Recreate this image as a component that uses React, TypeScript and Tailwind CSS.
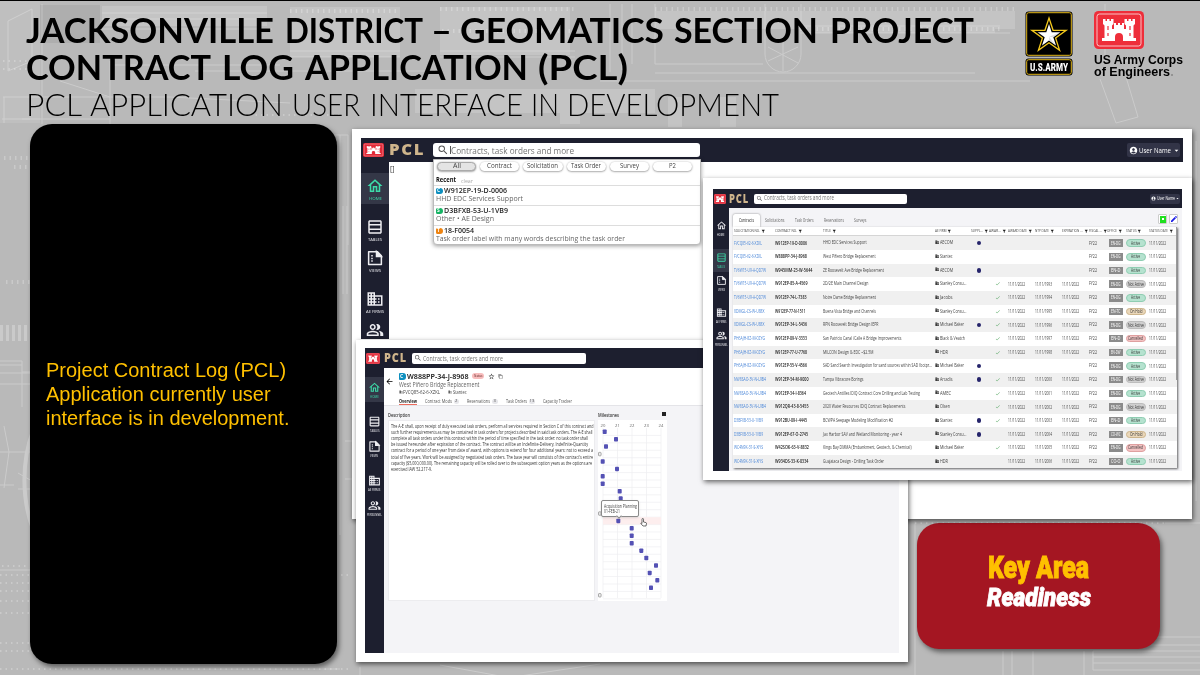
import { useLayoutEffect, useRef, useState, type ReactNode } from "react";
import {
  MdAccountCircle,
  MdArrowBack,
  MdArrowDropDown,
  MdCheck,
  MdContentCopy,
  MdDomain,
  MdEdit,
  MdFilterAlt,
  MdOutlineHome,
  MdOutlinePeopleAlt,
  MdOutlineTableRows,
  MdSearch,
  MdStarOutline,
} from "react-icons/md";

/** A single line of text condensed or widened to an exact width. */
function Fit({ w, className = "", children }: { w: number; className?: string; children: ReactNode }) {
  const ref = useRef<HTMLSpanElement>(null);
  const [scale, setScale] = useState(1);
  useLayoutEffect(() => {
    const el = ref.current;
    if (!el) return;
    el.style.transform = "none";
    const natural = el.getBoundingClientRect().width;
    const next = natural > 0 ? w / natural : 1;
    el.style.transform = `scaleX(${next})`;
    setScale(next);
  }, [w, children]);
  return (
    <span className="flex shrink-0" style={{ width: w }}>
      <span
        ref={ref}
        className={`block shrink-0 origin-left whitespace-nowrap ${className}`}
        style={{ transform: `scaleX(${scale})` }}
      >
        {children}
      </span>
    </span>
  );
}

function Backdrop() {
  return (
    <svg className="absolute inset-0 h-[675px] w-[1200px]" viewBox="0 0 1200 675" fill="none" stroke="#fff">
      <g opacity=".17" fill="#fff" stroke="none">
        <rect x="102" y="5" width="165" height="20" />
        <rect x="0" y="0" width="40" height="122" opacity=".5" />
        <rect x="290" y="6" width="110" height="50" />
        <rect x="440" y="6" width="130" height="48" />
        <rect x="655" y="10" width="360" height="18" />
        <rect x="805" y="20" width="190" height="12" />
        <rect x="415" y="88" width="240" height="24" />
        <rect x="560" y="93" width="20" height="30" />
        <rect x="668" y="96" width="14" height="30" />
        <rect x="720" y="96" width="16" height="30" />
      </g>
      <path d="M40 4h60v38H40z" fill="#000" opacity=".06" stroke="none" />
      <g opacity=".26">
        <path d="M8 20l24-12v52l-24 10zM42 3v120M3 96h107M110 60v63M2 118h108M4 96v26M60 80l50 16h60l120 6" />
        <path d="M102 12h165M102 18h165M102 28h170M110 64h170M195 70h240M290 50h110M290 56h110M440 50h135M440 56h135" />
        <path d="M610 3v68M622 3v66M632 3v60M655 3v60h108M655 72h320M600 80h430M800 25h200M800 32h210" />
        <path d="M765 3v50a18 18 0 0 0 36 0V3M783 36v34M768 60l30-14M768 46l30 16M1100 78l16 44 22-6-12-40M1105 3v60M1122 60h20" />
        <path d="M0 360h22v46M0 364h22M0 372h30M0 383h30M22 371h8M0 451h30M4 425l5 26-5 36M0 484h14M0 569h30" />
        <path d="M22 118h8M34 134h306v400M340 134h8v110M343 205v88M347 205v88M345 440h7M345 478h10" />
        <path d="M33 430a60 95 0 0 0 0 98" strokeWidth="4" />
        <path d="M18 472l14 8M18 488h12M180 668h160" />
        <path d="M360 666v9M440 664l60 11M600 663l-80 12M915 520v155M1003 650v25M1012 650v25M1033 650v25M1084 650v25M1093 650v19h107" />
        <path d="M1093 636h107M1165 522h35M1093 644h107M1093 650h107M1093 656h107M1093 662h107M1196 140v360" />
      </g>
      <g opacity=".25" strokeDasharray="1.5 4">
        <path d="M290 10h110M440 8h135M442 30h130M655 8h360M800 28h200M4 157h24M14 166h14M6 281h24" strokeWidth="4" />
        <path d="M0 332h30" strokeWidth="16" strokeDasharray="3 3" />
        <path d="M2 565h27M0 574h350M0 582h30M0 590h30M0 600h30M0 612h30M0 642h30M0 650h30M0 668h350M3 60h30M3 68h30M915 522h250M250 114h90" strokeWidth="2" />
      </g>
    </svg>
  );
}

function ArmyLogo() {
  return (
    <svg className="h-[65px] w-12 shrink-0 overflow-visible" viewBox="0 0 48 65">
      <rect x=".5" y=".5" width="47" height="45" rx="3" fill="#000" />
      <rect x="1.7" y="1.7" width="44.6" height="42.6" rx="2" fill="none" stroke="#e3b71b" strokeWidth="1" />
      <path
        d="M24 7l4.1 12.3h13L30.6 27l4 12.4L24 31.8l-10.600 7.600 4-12.400L6.900 19.300h13z"
        fill="#000"
        stroke="#f3c81c"
        strokeWidth="1.300"
      />
      <path d="M24 13l2.700 8.200h8.600l-7 5.100 2.700 8.200L24 29.400l-7 5.100 2.700-8.200-7-5.100h8.600z" fill="#fff" />
      <path d="M24 13v12.700l7 8.800L24 29.400zM24 25.700l11.300-4.500-7 5.100z" fill="#ccc" opacity=".6" />
      <rect x=".5" y="47.500" width="47" height="17" rx="3" fill="#000" />
      <rect x="1.700" y="48.700" width="44.600" height="14.600" rx="2" fill="none" stroke="#e3b71b" strokeWidth="1" />
      <text
        x="24"
        y="60"
        fill="#fff"
        textAnchor="middle"
        fontFamily="Roboto, sans-serif"
        fontWeight="900"
        fontSize="11"
        textLength="38"
        lengthAdjust="spacingAndGlyphs"
      >
        U.S.ARMY
      </text>
    </svg>
  );
}

function Castle({ className, color = "#e22a38" }: { className: string; color?: string }) {
  return (
    <svg className={className} viewBox="0 0 50 38" preserveAspectRatio="none">
      <rect width="50" height="38" rx="4.500" fill={color} />
      <rect x="3" y="3" width="44" height="32" rx="2.500" fill="none" stroke="#fff" strokeOpacity=".7" strokeWidth="1" />
      <path
        d="M9 8h2.500v2H13V8h2.500v2H17V8h2.500v5l-1.500 1.500V18h2v-6h2v2h2v-2h2v2h2v-2h2v6h2v-3.500L30.500 13V8H33v2h1.500V8H37v2h1.500V8H41v5l-1.500 1.500V27H42v3H29v-4a4 4 0 0 0-8 0v4H8v-3h2.500V14.500L9 13z"
        fill="#fff"
      />
      <path d="M14 15v4M36 15v4M14 22v3M36 22v3" stroke={color} strokeWidth="1.200" />
    </svg>
  );
}

function ViewsIcon({ className }: { className: string }) {
  return (
    <svg className={className} viewBox="0 0 24 24" fill="none" stroke="currentColor" strokeWidth="2">
      <path d="M3.500 3.500H15l5.500 5.500v11.500h-17z" strokeLinejoin="round" />
      <path d="M14 3.500V10h6.500z" fill="currentColor" />
      <path d="M8 8v2M8 11.500v2M8 15v2" />
    </svg>
  );
}

type Size = "lg" | "md" | "sm";

const railStyles = {
  lg: { rail: "w-7 pt-[11px] gap-[10px]", item: "h-[31px] pt-[4px]", icon: "size-[18px]", label: "text-[4px] mt-[2px]", ratio: 1 },
  md: { rail: "w-[19px] pt-[9px] gap-[9px]", item: "h-[25px] pt-[4px]", icon: "size-[13px]", label: "text-[3px] mt-[2px]", ratio: 0.68 },
  sm: { rail: "w-4 pt-[9px] gap-[9px]", item: "h-[23px] pt-[3px]", icon: "size-[11px]", label: "text-[2.600px] mt-[3px]", ratio: 0.58 },
};

function Rail({ size, active }: { size: Size; active: string }) {
  const s = railStyles[size];
  const groups = [
    [{ name: "HOME", w: 13, Icon: MdOutlineHome }],
    [
      { name: "TABLES", w: 14, Icon: MdOutlineTableRows },
      { name: "VIEWS", w: 12, Icon: ViewsIcon },
    ],
    [
      { name: "AE FIRMS", w: 18, Icon: MdDomain },
      { name: "PERSONNEL", w: 22, Icon: MdOutlinePeopleAlt },
    ],
  ];
  return (
    <div className={`flex shrink-0 flex-col bg-[#1d1f2f] ${s.rail}`}>
      {groups.map((group) => (
        <div key={group[0].name} className="flex flex-col">
          {group.map(({ name, w, Icon }) => (
            <div
              key={name}
              className={`flex shrink-0 flex-col items-center leading-none ${s.item} ${
                active === name ? "bg-[#343747] text-[#3ddcaa]" : "text-[#eeeef2]"
              }`}
            >
              <Icon className={`shrink-0 ${s.icon}`} />
              {!(size === "lg" && name === "PERSONNEL") && (
                <Fit w={w * s.ratio} className={s.label}>
                  {name}
                </Fit>
              )}
            </div>
          ))}
        </div>
      ))}
    </div>
  );
}

function UserButton({ small = false }: { small?: boolean }) {
  return (
    <div
      className={`ml-auto flex items-center rounded-[2px] bg-[#323447] leading-none text-white ${
        small ? "mr-[2px] h-[10px] w-[30px] gap-[.5px] px-px" : "mr-[3px] h-[14px] w-[53px] gap-px pl-[2px]"
      }`}
    >
      <MdAccountCircle className={small ? "size-[5px] shrink-0" : "size-[9px] shrink-0"} />
      <Fit w={small ? 18 : 32} className={small ? "text-[4.500px]" : "text-[7px]"}>
        User Name
      </Fit>
      <MdArrowDropDown className={small ? "size-[5px] shrink-0" : "size-[9px] shrink-0"} />
    </div>
  );
}

const recents = [
  { tag: "C", color: "bg-[#0d8fbf]", id: "W912EP-19-D-0006", idW: 63, label: "HHD EDC Services Support", w: 87 },
  { tag: "S", color: "bg-[#16b364]", id: "D3BFXB-53-U-1VB9", idW: 64, label: "Other • AE Design", w: 58 },
  { tag: "T", color: "bg-[#ee8411]", id: "18-F0054", idW: 30, label: "Task order label with many words describing the task order", w: 189 },
];

const pills = [
  { name: "All", w: 8 },
  { name: "Contract", w: 25 },
  { name: "Solicitation", w: 31 },
  { name: "Task Order", w: 30 },
  { name: "Survey", w: 19 },
  { name: "P2", w: 7 },
];

function HomeWindow() {
  return (
    <section className="absolute left-[352px] top-[129px] h-[390px] w-[840px] bg-white p-[9px] shadow-[1px_2px_5px_rgba(0,0,0,.6)]">
      <div className="flex h-[201px] flex-col overflow-hidden">
        <header className="flex h-6 shrink-0 items-center bg-[#1d1f2f]">
          <Castle className="ml-[2px] h-[14px] w-[21px]" />
          <div className="ml-[5px] w-[44px]">
            <Fit w={36} className="text-[15.500px] font-extrabold leading-none tracking-[1.500px] text-[#cfb58c]">
              PCL
            </Fit>
          </div>
          <div className="flex h-[14px] w-[267px] items-center rounded-[3px] bg-white pl-1 leading-none text-[#747474]">
            <MdSearch className="size-3 text-[#555]" />
            <span className="ml-px h-2 w-px bg-[#555]" />
            <Fit w={123} className="text-[9px]">
              Contracts, task orders and more
            </Fit>
          </div>
          <UserButton />
        </header>
        <div className="flex min-h-0 grow">
          <Rail size="lg" active="HOME" />
          <div className="pl-px pt-[3px] text-[7px] leading-none text-[#333]">[]</div>
        </div>
      </div>
      <div className="absolute left-[81px] top-[30px] flex h-[86px] w-[268px] flex-col rounded-b-[4px] border border-[#bbb] bg-white leading-none shadow-[0_1px_4px_rgba(0,0,0,.4)]">
        <div className="flex gap-[4px] px-[3px] pt-[2px]">
          {pills.map((p, i) => (
            <div
              key={p.name}
              className={`flex h-[9px] w-[39.200px] shrink-0 items-center justify-center rounded-full text-[#444] shadow-[0_0.500px_2px_rgba(0,0,0,.5)] ${
                i === 0 ? "border border-[#aaa] bg-[#e4e4e4]" : "bg-white"
              }`}
            >
              <Fit w={p.w} className="text-[6.500px]">
                {p.name}
              </Fit>
            </div>
          ))}
        </div>
        <div className="flex h-[12.500px] shrink-0 items-end gap-[5px] pl-[2px]">
          <Fit w={20} className="text-[6.500px] font-bold text-[#111]">
            Recent
          </Fit>
          <Fit w={12} className="text-[6px] text-[#aaa]">
            clear
          </Fit>
        </div>
        {recents.map((r) => (
          <div key={r.id} className="mt-px flex h-[19.200px] shrink-0 flex-col border-t border-[#ddd] px-[1.500px] pt-px">
            <div className="flex h-[8px] items-center gap-px">
              <span className={`flex h-[6px] w-[7.500px] items-center rounded-l-[1.500px] rounded-r-[3px] pl-[1.500px] text-[5px] font-bold text-white ${r.color}`}>
                {r.tag}
              </span>
              <Fit w={r.idW} className="text-[7.500px] font-semibold text-[#222]">
                {r.id}
              </Fit>
            </div>
            <Fit w={r.w} className="text-[7.500px] text-[#666]">
              {r.label}
            </Fit>
          </div>
        ))}
      </div>
    </section>
  );
}

const description = [
  { t: "The A-E shall, upon receipt of duly executed task orders, perform all services required in Section C of this contract and", w: 202.5 },
  { t: "such further requirements as may be contained in task orders for projects described in said task orders. The A-E shall", w: 201.5 },
  { t: "complete all task orders under this contract within the period of time specified in the task order: no task order shall", w: 197 },
  { t: "be issued hereunder after expiration of the contract. The contract will be an Indefinite-Delivery, Indefinite-Quantity", w: 197 },
  { t: "contract for a period of one year from date of award, with options to extend for four additional years: not to exceed a", w: 202 },
  { t: "total of five years. Work will be assigned by negotiated task orders. The base year will constists of the contract’s entire", w: 202 },
  { t: "capacity ($5,000,000.00). The remaining capacity will be rolled over to the subsequent option years as the options are", w: 201 },
  { t: "exercised IAW 52.217-9.", w: 41 },
];

const markers = [
  6.7, 18, 8, null, 4.7, 19, 4.7, 4.7, 21.7, 22.7, 20, null, 20.3, 33.7, 33.7, 33.7, 43.3, 48.3, 58, 51.7, 59.3, 53, null,
];

function Milestones() {
  return (
    <svg className="block h-[181px] w-[69px] bg-white" viewBox="0 0 69 181">
      <g stroke="#eeeef1" strokeWidth=".7">
        {[5, 19.5, 34, 48.500, 63].map((x) => (
          <path key={x} d={`M${x} 8v170`} />
        ))}
        {markers.map((_, i) => (
          <path key={i} d={`M5 ${15.400 + i * 7.430}h58`} />
        ))}
      </g>
      <rect x="5" y="97.200" width="58" height="7.200" fill="#fdeeee" />
      {["20", "21", "22", "23", "24"].map((y, i) => (
        <text key={y} x={5 + i * 14.5} y="7" fontSize="4.200" textAnchor="middle" fill="#666">
          {y}
        </text>
      ))}
      {markers.map((x, i) =>
        x === null ? (
          <rect key={i} x=".5" y={10.100 + i * 7.430} width="2.600" height="3.400" rx=".6" fill="#eee" stroke="#888" strokeWidth=".7" />
        ) : (
          <rect key={i} x={x - 2} y={9.500 + i * 7.430} width="4" height="4.500" rx=".8" fill="#5451b4" />
        ),
      )}
    </svg>
  );
}

function DetailWindow() {
  return (
    <section className="absolute left-[356px] top-[340px] h-[321.500px] w-[552px] bg-white px-[9px] pb-[9px] pt-2 shadow-[1px_2px_5px_rgba(0,0,0,.6)]">
      <div className="flex h-full flex-col overflow-hidden">
        <header className="flex h-5 shrink-0 items-center bg-[#1d1f2f]">
          <Castle className="ml-px h-[11px] w-[14px]" />
          <div className="ml-[3.500px] w-[28.500px]">
            <Fit w={23} className="text-[12.500px] font-extrabold leading-none tracking-[1px] text-[#cfb58c]">
              PCL
            </Fit>
          </div>
          <div className="flex h-[11px] w-[174px] items-center gap-px rounded-[2px] bg-white pl-[2px] leading-none text-[#747474]">
            <MdSearch className="size-2 text-[#555]" />
            <Fit w={80} className="text-[7px]">
              Contracts, task orders and more
            </Fit>
          </div>
        </header>
        <div className="flex min-h-0 grow">
          <Rail size="md" active="HOME" />
          <div className="flex grow flex-col bg-[#f4f4f7] leading-none">
            <div className="flex h-[38px] shrink-0 border-b border-[#e4e4e8] bg-white">
              <MdArrowBack className="ml-px mt-[9px] size-[9px] text-black" />
              <div className="ml-[4.500px] flex flex-col pt-1">
                <div className="flex h-[9px] items-center">
                  <span className="flex h-[6.500px] w-[7px] items-center rounded-l-[1px] rounded-r-[3px] bg-[#0d8fbf] pl-[1.500px] text-[5px] font-bold text-white">
                    C
                  </span>
                  <div className="ml-px">
                    <Fit w={61.5} className="font-['Noto_Sans',sans-serif] text-[7.500px] font-semibold text-[#222]">
                      W888PP-34-J-8968
                    </Fit>
                  </div>
                  <span className="ml-[4px] flex h-[6px] w-3 items-center justify-center rounded-full bg-[#f7bcbc] text-[#5b2020]">
                    <Fit w={8.5} className="text-[4px]">
                      Status
                    </Fit>
                  </span>
                  <MdStarOutline className="ml-1 size-[7px] text-[#333]" />
                  <MdContentCopy className="ml-[3px] size-[5px] text-[#444]" />
                </div>
                <Fit w={80.5} className="text-[6.500px] leading-[8px] text-[#666]">
                  West Piñero Bridge Replacement
                </Fit>
                <div className="flex h-[7px] items-center text-[#444]">
                  <MdDomain className="size-1" />
                  <Fit w={37} className="text-[5px]">
                    FVCQ85-62-6-XZKL
                  </Fit>
                  <MdDomain className="ml-2 size-1" />
                  <div className="ml-px">
                    <Fit w={13.5} className="text-[5px]">
                      Stantec
                    </Fit>
                  </div>
                </div>
                <div className="mt-[1.500px] flex h-[8px] gap-[8px] text-[#555]">
                  <div className="h-full w-[18px] border-b border-[#ec6a5b] pt-[1.500px]">
                    <Fit w={18} className="text-[4.800px] font-bold text-[#222]">
                      Overview
                    </Fit>
                  </div>
                  {[
                    { t: "Contract Mods", w: 27, n: "2" },
                    { t: "Reservations", w: 23, n: "3" },
                    { t: "Task Orders", w: 21, n: "13" },
                    { t: "Capacity Tracker", w: 29, n: "" },
                  ].map((tab) => (
                    <div key={tab.t} className="flex gap-[2px] pt-[1.500px]">
                      <Fit w={tab.w} className="text-[4.800px]">
                        {tab.t}
                      </Fit>
                      {tab.n && (
                        <span className="h-[5px] min-w-[5.500px] rounded-full bg-[#e6e6ea] px-[1px] text-center text-[4.200px]">{tab.n}</span>
                      )}
                    </div>
                  ))}
                </div>
              </div>
            </div>
            <div className="flex gap-[3px] pl-[4px] pt-[7px]">
              <div className="flex w-[207px] flex-col">
                <div className="h-[7px]">
                  <Fit w={22} className="text-[5.400px] font-semibold text-[#333]">
                    Description
                  </Fit>
                </div>
                <div className="flex h-[181px] flex-col border border-[#ececef] bg-white pl-[1.500px] pt-[1.500px]">
                  {description.map((line) => (
                    <Fit key={line.t} w={line.w} className="text-[4.800px] leading-[6.200px] text-[#333]">
                      {line.t}
                    </Fit>
                  ))}
                </div>
              </div>
              <div className="flex w-[69px] flex-col">
                <div className="flex h-[7px] justify-between pr-px">
                  <Fit w={21} className="text-[5.400px] font-semibold text-[#333]">
                    Milestones
                  </Fit>
                  <span className="-mt-px size-[4px] bg-[#222]" />
                </div>
                <Milestones />
              </div>
            </div>
          </div>
        </div>
      </div>
      <div className="absolute left-[245px] top-[159.500px] flex h-[17px] w-[38px] flex-col gap-px rounded-[2px] border border-[#8a8a8a] bg-white pl-[1.500px] pt-[3px] leading-none text-[#444] shadow-sm">
        <Fit w={33} className="text-[4.600px]">
          Acquisition Planning
        </Fit>
        <Fit w={16} className="text-[4.600px]">
          01-FEB-21
        </Fit>
        <span className="absolute -bottom-[2.500px] left-[15px] size-1 rotate-45 border-b border-r border-[#8a8a8a] bg-white" />
      </div>
      <svg className="absolute left-[284px] top-[178px] h-[9px] w-[7px]" viewBox="0 0 14 18" fill="#fff" stroke="#333" strokeWidth="1.400">
        <path d="M4 11V2.500a1.500 1.500 0 0 1 3 0V8l5 1.200c1 .3 1.300 1 1 2L12 16H6L2 11.500c-1-1.500.500-2 2-.500z" />
      </svg>
    </section>
  );
}

type Row = {
  s: string;
  sw: number;
  c: string;
  cw: number;
  t: string;
  tw: number;
  f: string;
  fw: number;
  dot?: boolean;
  check?: boolean;
  year?: number;
  office: string;
  status: "Active" | "Not Active" | "On Hold" | "Cancelled";
};

const rows: Row[] = [
  { s: "FVCQ85-62-6-XZKL", sw: 28, c: "W912EP-19-D-0006", cw: 32, t: "HHD EDC Services Support", tw: 43.7, f: "AECOM", fw: 13, dot: true, office: "EN-DG", status: "Active" },
  { s: "FVCQ85-62-6-XZKL", sw: 28, c: "W888PP-34-J-8968", cw: 32, t: "West Piñero Bridge Replacement", tw: 52.7, f: "Stantec", fw: 12.5, office: "EN-DG", status: "Active" },
  { s: "TV6W15-U9-A-QD7W", sw: 32, c: "W945MM-23-W-5644", cw: 37.5, t: "ZE Roosevelt Ave Bridge Replacement", tw: 61, f: "AECOM", fw: 13, dot: true, office: "EN-D", status: "Active" },
  { s: "TV6W15-U9-A-QD7W", sw: 32, c: "W912EP-85-A-4569", cw: 32.5, t: "2D/2E Main Channel Design", tw: 45.5, f: "Stanley Consu...", fw: 26.5, check: true, year: 1993, office: "EN-DG", status: "Not Active" },
  { s: "TV6W15-U9-A-QD7W", sw: 32, c: "W912EP-74-L-7383", cw: 31.5, t: "Notre Dame Bridge Replacement", tw: 53, f: "Jacobs", fw: 12.5, check: true, year: 1994, office: "EN-DG", status: "Active" },
  { s: "XDMGL-CS-W-U88X", sw: 30.5, c: "W912EP-77-N-1511", cw: 30.5, t: "Buena Vista Bridge and Channels", tw: 53, f: "Stanley Consu...", fw: 26.5, check: true, year: 1995, office: "EN-TC", status: "On Hold" },
  { s: "XDMGL-CS-W-U88X", sw: 30.5, c: "W912EP-34-L-5436", cw: 32, t: "RPN Roosevelt Bridge Design IEPR", tw: 55.5, f: "Michael Baker", fw: 24, dot: true, check: true, year: 1996, office: "EN-DG", status: "Not Active" },
  { s: "PH6AJH-8Z-M-0ZYG", sw: 31, c: "W912EP-09-V-3333", cw: 32, t: "San Patricio Canal /Calle A Bridge Improvements", tw: 78.5, f: "Black & Veatch", fw: 25, check: true, year: 1997, office: "EN-D", status: "Cancelled" },
  { s: "PH6AJH-8Z-M-0ZYG", sw: 31, c: "W912EP-77-U-7768", cw: 32, t: "MILCON Design & EDC ~$2.5M", tw: 50.5, f: "HDR", fw: 8, check: true, year: 1998, office: "EN-DW", status: "Active" },
  { s: "PH6AJH-8Z-M-0ZYG", sw: 31, c: "W912EP-55-V-4566", cw: 32, t: "SAD Sand Search Investigation for sand sources within SAD footpr...", tw: 109, f: "Michael Baker", fw: 24, dot: true, office: "EN-DG", status: "Active" },
  { s: "NW8SAO-3V-N-L9B4", sw: 32, c: "W912EP-54-M-9000", cw: 33.5, t: "Tampa Vibracore Borings", tw: 40.5, f: "Arcadis", fw: 12.5, dot: true, check: true, year: 2000, office: "EN-DG", status: "Not Active" },
  { s: "NW8SAO-3V-N-L9B4", sw: 32, c: "W912EP-34-I-8364", cw: 31, t: "Geotech Antilles IDIQ Contract Core Drilling and Lab Testing", tw: 97, f: "AMEC", fw: 11, check: true, year: 2001, office: "EN-DG", status: "Active" },
  { s: "NW8SAO-3V-N-L9B4", sw: 32, c: "W912QR-43-8-5455", cw: 33.5, t: "2020 Water Resources IDIQ Contract Replacements", tw: 82.5, f: "Olsen", fw: 10, check: true, year: 2002, office: "EN-DG", status: "Not Active" },
  { s: "D3BFXB-53-U-1VB9", sw: 29, c: "W912BU-09-I-4445", cw: 32, t: "BCWPA Seepage Modeling Modification #2", tw: 70, f: "Stantec", fw: 12.5, dot: true, check: true, year: 2003, office: "EN-D", status: "Active" },
  { s: "D3BFXB-53-U-1VB9", sw: 29, c: "W912EP-67-O-2745", cw: 33, t: "Jax Harbor SAV and Wetland Monitoring - year 4", tw: 79, f: "Stanley Consu...", fw: 26.5, dot: true, year: 2004, office: "CO-WC", status: "On Hold" },
  { s: "WC4N9K-31-S-XIYS", sw: 29, c: "W42SOK-63-V-8832", cw: 34, t: "Kings Bay DMMA (Embankment, Geotech, & Chemical)", tw: 88.5, f: "Michael Baker", fw: 24, check: true, year: 2005, office: "EN-DG", status: "Cancelled" },
  { s: "WC4N9K-31-S-XIYS", sw: 29, c: "W934DS-33-K-0334", cw: 33.5, t: "Guajataca Design - Drilling Task Order", tw: 61, f: "HDR", fw: 8, year: 2006, office: "CO-O", status: "Active" },
];

const statusStyles = {
  Active: { box: "bg-[#b5e2cf] border-[#8fcdb2]", w: 9 },
  "Not Active": { box: "bg-[#cfcfcf] border-[#bcbcbc]", w: 16 },
  "On Hold": { box: "bg-[#ead7b9] border-[#cdb58c]", w: 12.5 },
  Cancelled: { box: "bg-[#f3c3c3] border-[#dfa0a0]", w: 15 },
};

const headings = [
  { t: "SOLICITATION NO.", w: 26 },
  { t: "CONTRACT NO.", w: 22 },
  { t: "TITLE", w: 8 },
  { t: "AE FIRM", w: 11.5 },
  { t: "SUPPL...", w: 12 },
  { t: "AWAR...", w: 11.5 },
  { t: "AWARD DATE", w: 19 },
  { t: "NTP DATE", w: 14 },
  { t: "EXPIRATION ...", w: 20.5 },
  { t: "FISCAL ...", w: 13 },
  { t: "OFFICE", w: 10 },
  { t: "STATUS", w: 10.5 },
  { t: "STATUS DATE", w: 19 },
];

const tableGrid =
  "grid grid-cols-[40.500px_48.500px_111.500px_36.500px_18px_18.500px_27px_27.500px_27px_18px_18.500px_23px_28px] items-center pl-px";

function DateText({ year }: { year?: number }) {
  return year ? (
    <Fit w={17} className="text-[5px]">
      11/11/{year}
    </Fit>
  ) : (
    <span />
  );
}

function TableWindow() {
  return (
    <section className="absolute left-[703px] top-[178px] h-[302px] w-[489px] bg-white px-[10px] pb-[9px] pt-[11px] shadow-[1px_2px_5px_rgba(0,0,0,.6)]">
      <div className="flex h-full flex-col overflow-hidden">
        <header className="flex h-[19px] shrink-0 items-center bg-[#1d1f2f]">
          <Castle className="ml-px h-[10px] w-3" />
          <div className="ml-[3px] w-[25px]">
            <Fit w={20} className="text-[11.500px] font-extrabold leading-none tracking-[1px] text-[#cfb58c]">
              PCL
            </Fit>
          </div>
          <div className="flex h-[10px] w-[153px] items-center gap-px rounded-[2px] bg-white pl-[2px] leading-none text-[#747474]">
            <MdSearch className="size-[7px] text-[#555]" />
            <Fit w={70} className="text-[6.200px]">
              Contracts, task orders and more
            </Fit>
          </div>
          <UserButton small />
        </header>
        <div className="flex min-h-0 grow">
          <Rail size="sm" active="TABLES" />
          <div className="flex grow flex-col bg-[#f4f4f7] pl-1 pt-[6px] leading-none">
            <div className="flex h-[13px] shrink-0 items-center text-[#666]">
              <div className="flex h-full w-[26.500px] items-center justify-center rounded-t-[2px] bg-white text-[#222] shadow-[0_0_2px_rgba(0,0,0,.5)]">
                <Fit w={15} className="text-[4.800px]">
                  Contracts
                </Fit>
              </div>
              <div className="ml-[5px] flex gap-[10.500px]">
                <Fit w={19.5} className="text-[4.800px]">
                  Solicitations
                </Fit>
                <Fit w={18.5} className="text-[4.800px]">
                  Task Orders
                </Fit>
                <Fit w={20} className="text-[4.800px]">
                  Reservations
                </Fit>
                <Fit w={12.5} className="text-[4.800px]">
                  Surveys
                </Fit>
              </div>
              <div className="-mt-[3px] ml-auto mr-[4px] flex gap-[2px]">
                <span className="flex h-[10px] w-[9px] items-center justify-center rounded-[1px] border border-[#ccc] bg-white">
                  <span className="flex h-[7px] w-[6px] shrink-0 items-center justify-center bg-[#1fe01f]">
                    <span className="size-[2px] bg-white" />
                  </span>
                </span>
                <span className="flex h-[10px] w-[9px] items-center justify-center rounded-[1px] border border-[#ccc] bg-white">
                  <MdEdit className="size-[8px] shrink-0 text-[#1a1ae6]" />
                </span>
              </div>
            </div>
            <div className="w-[444px] bg-white text-[#444] shadow-[1px_1px_2px_rgba(0,0,0,.6)]">
              <div className={`h-[9.300px] border-b border-[#d5d5d5] ${tableGrid}`}>
                {headings.map((h) => (
                  <div key={h.t} className="flex items-center gap-px">
                    <Fit w={h.w} className="text-[4px]">
                      {h.t}
                    </Fit>
                    <MdFilterAlt className="size-[4.500px] shrink-0 text-[#222]" />
                  </div>
                ))}
              </div>
              {rows.map((r, i) => (
                <div key={r.c} className={`h-[13.660px] ${tableGrid} ${i % 2 === 0 ? "bg-[#f0f0f0]" : "bg-white"}`}>
                  <Fit w={r.sw} className="text-[5.200px] text-[#4a86d8]">
                    {r.s}
                  </Fit>
                  <Fit w={r.cw} className="text-[5.200px] font-semibold text-[#222]">
                    {r.c}
                  </Fit>
                  <Fit w={r.tw} className="text-[5.400px]">
                    {r.t}
                  </Fit>
                  <div className="flex items-center gap-[.5px]">
                    <MdDomain className="-mt-[1.500px] size-[4.500px] shrink-0 text-[#222]" />
                    <Fit w={r.fw} className="text-[5.400px]">
                      {r.f}
                    </Fit>
                  </div>
                  <span className={`ml-[6px] h-[4.500px] w-[4px] rounded-full ${r.dot ? "bg-[#25246b]" : ""}`} />
                  <span className="pl-[6px]">{r.check && <MdCheck className="size-[5.500px] text-[#3d9a4c]" />}</span>
                  <DateText year={r.year && 2022} />
                  <DateText year={r.year} />
                  <DateText year={r.year && 2022} />
                  <Fit w={8} className="text-[5.200px]">
                    FY22
                  </Fit>
                  <span className="ml-[2px] flex h-[7.500px] w-[13.500px] items-center justify-center bg-[#8b8b8b] text-white">
                    <Fit w={9.5} className="text-[5px]">
                      {r.office}
                    </Fit>
                  </span>
                  <span className={`flex h-[7.500px] w-[20.500px] items-center justify-center rounded-full border-[.5px] text-[#333] ${statusStyles[r.status].box}`}>
                    <Fit w={statusStyles[r.status].w} className="text-[5px]">
                      {r.status}
                    </Fit>
                  </span>
                  <DateText year={2022} />
                </div>
              ))}
            </div>
          </div>
        </div>
      </div>
      <span className="absolute left-[472.500px] top-[49px] h-[153px] w-[1.500px] bg-[#999]" />
    </section>
  );
}

type Word = [text: string, width: number, gapBefore: number];

const titleTop: Word[] = [
  ["JACKSONVILLE", 248, 0],
  ["DISTRICT", 138, 11],
  ["–", 21, 7.5],
  ["GEOMATICS", 204, 8.5],
  ["SECTION", 144, 10],
  ["PROJECT", 144, 12],
];
const titleBottom: Word[] = [
  ["CONTRACT", 185, 0],
  ["LOG", 72, 10.5],
  ["APPLICATION", 223, 11],
  ["(PCL)", 90, 10],
];
const subtitle: Word[] = [
  ["PCL", 56, -0.5],
  ["APPLICATION", 193, 8.500],
  ["USER", 68, 9],
  ["INTERFACE", 153, 9.500],
  ["IN", 28, 8],
  ["DEVELOPMENT", 212, 8.500],
];

function WordLine({ words, className }: { words: Word[]; className: string }) {
  return (
    <span className="flex">
      {words.map(([text, width, gap]) => (
        <span key={text} style={{ marginLeft: gap }}>
          <Fit w={width} className={className}>
            {text}
          </Fit>
        </span>
      ))}
    </span>
  );
}

export default function App() {
  return (
    <div className="relative flex h-[675px] w-[1200px] flex-col overflow-hidden border-t border-black bg-[#b9b9b9] font-['Open_Sans','Noto_Sans',sans-serif]">
      <Backdrop />
      <header className="relative flex h-[123px] shrink-0 justify-between pl-[26px] pr-[17px] pt-[10px] font-[Lato,sans-serif] text-black">
        <h1 className="flex flex-col">
          <WordLine words={titleTop} className="text-[34px] font-bold leading-[37px]" />
          <WordLine words={titleBottom} className="text-[34px] font-bold leading-[37px]" />
          <WordLine words={subtitle} className="text-[30.500px] font-light leading-[38px]" />
        </h1>
        <div className="flex gap-[21px] font-['Liberation_Sans',sans-serif]">
          <ArmyLogo />
          <div className="flex w-[89px] flex-col">
            <Castle className="h-[38px] w-[50px]" color="#ee2e3a" />
            <div className="mt-[5px] flex flex-col leading-[12px]">
              <Fit w={89} className="text-[12.500px] font-bold">
                US Army Corps
              </Fit>
              <div className="flex items-end gap-px">
                <Fit w={76} className="text-[12.500px] font-bold">
                  of Engineers
                </Fit>
                <span className="mb-[2px] size-[2px] rounded-full border-[.5px] border-[#777]" />
              </div>
            </div>
          </div>
        </div>
      </header>
      <main className="relative flex grow justify-between pl-[30px] pr-10">
        <aside className="flex h-[540px] w-[307px] flex-col justify-center rounded-[22px] bg-black pl-4 shadow-[2px_3px_5px_rgba(0,0,0,.5)]">
          <p className="font-['Liberation_Sans',sans-serif] text-[20px] leading-6 text-[#ffc000]">
            Project Contract Log (PCL)
            <br />
            Application currently user
            <br />
            interface is in development.
          </p>
        </aside>
        <div className="mt-[399px] flex h-[126px] w-[243px] flex-col items-center rounded-[22px] bg-[#a41622] pt-[29px] font-[Roboto,sans-serif] font-black shadow-[2px_3px_5px_rgba(0,0,0,.5)]">
          <Fit w={101} className="text-[31px] leading-[32px] text-[#ffc000] [-webkit-text-stroke:0.900px_#ffc000]">
            Key Area
          </Fit>
          <Fit w={104} className="-skew-x-6 text-[25px] italic leading-[27px] text-white [-webkit-text-stroke:0.800px_#fff]">
            Readiness
          </Fit>
        </div>
      </main>
      <div className="absolute inset-x-0 -top-px">
        <HomeWindow />
        <DetailWindow />
        <TableWindow />
      </div>
    </div>
  );
}
